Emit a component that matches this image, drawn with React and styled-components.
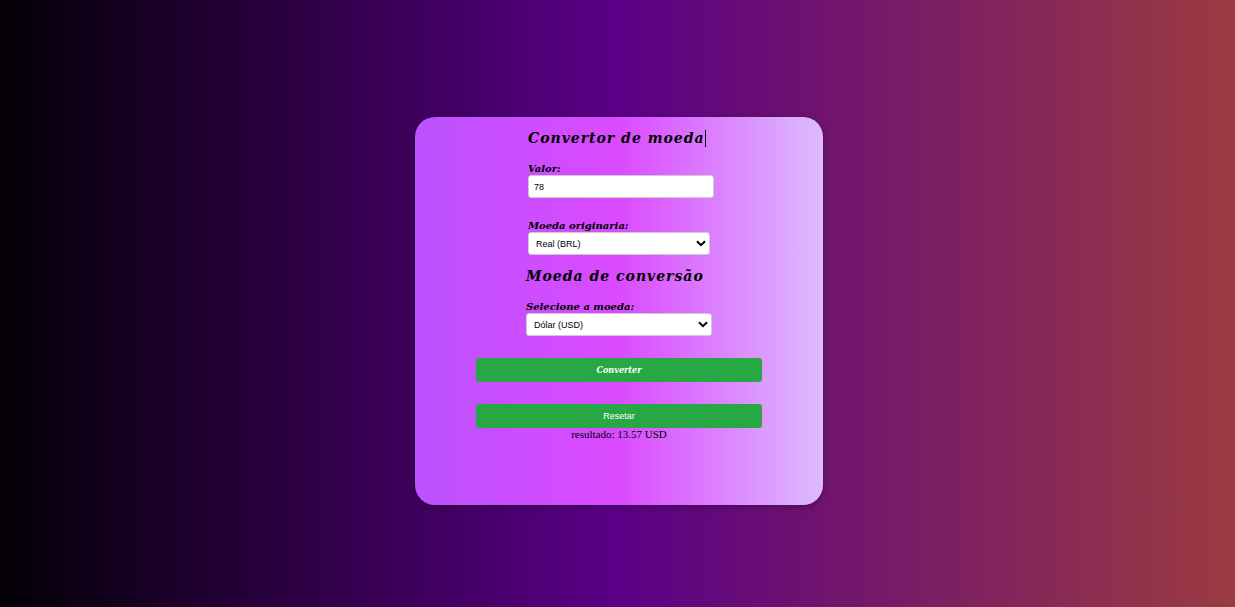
import React, { useState } from "react";
import styled, { createGlobalStyle } from "styled-components";

const GlobalStyle = createGlobalStyle`
  * { box-sizing: border-box; }
  body {
    margin: 0;
    font-family: "Liberation Serif", "Times New Roman", serif;
    color: #000;
  }
`;

const slab = `"DejaVu Serif", serif`;
const slabNarrow = `"DejaVu Serif Condensed", "DejaVu Serif", serif`;

const Page = styled.main`
  min-height: 100vh;
  display: flex;
  flex-direction: column;
  align-items: center;
  padding: 117px 0 102px 3px;
  background: linear-gradient(to right, #030006, #5a0086 50%, #9b3b41);
`;

const Card = styled.form`
  width: 33vw;
  min-width: 300px;
  flex: 1;
  display: flex;
  flex-direction: column;
  align-items: center;
  padding: 13px 0 60px;
  border-radius: 20px;
  background: linear-gradient(to right, #bb52ff, #db4aff 50%, #dcbcff);
  box-shadow: 0 2px 6px rgba(0, 0, 0, 0.3);
`;

const Group = styled.section`
  display: flex;
  flex-direction: column;
  align-items: flex-start;
  width: ${(p) => p.$width}px;
  margin-bottom: ${(p) => p.$gap}px;
`;

const Title = styled.h1`
  margin: 0 0 16px;
  font: italic bold 14px/17px ${slab};
  letter-spacing: 1px;
  white-space: nowrap;
  border-right: 1px solid ${(p) => (p.$caret ? "#000" : "transparent")};
`;

const Label = styled.label`
  font: italic bold 10px/12px ${slab};
  white-space: nowrap;
`;

const Input = styled.input`
  width: 186px;
  height: 23px;
  padding: 0 5px;
  border: 1px solid #ccc;
  border-radius: 3px;
  background: #fff;
  font: 9px "Liberation Sans", Arial, sans-serif;
  color: #000;
  margin-bottom: 22px;
`;

const SelectBox = styled.div`
  position: relative;
  width: 100%;
  height: 23px;
`;

const Select = styled.select`
  appearance: none;
  width: 100%;
  height: 100%;
  padding: 0 20px 0 7px;
  border: 1px solid #ccc;
  border-radius: 3px;
  background: #fff;
  font: 9px "Liberation Sans", Arial, sans-serif;
  color: #000;
`;

const Chevron = styled.svg`
  position: absolute;
  right: 4px;
  top: 8px;
  pointer-events: none;
`;

const Button = styled.button`
  width: 70%;
  height: 24px;
  margin: 0 0 ${(p) => (p.$slab ? 22 : 0)}px;
  padding: 0;
  border: 0;
  border-radius: 3px;
  background: #28a745;
  color: #fff;
  font: ${(p) => (p.$slab ? `italic bold 9px ${slabNarrow}` : `9px "Liberation Sans", Arial, sans-serif`)};
  cursor: pointer;
`;

const Result = styled.output`
  font-size: 11px;
  line-height: 12px;
`;

const currencies = [
  ["BRL", "Real (BRL)"],
  ["USD", "Dólar (USD)"],
];

function CurrencySelect({ id, value, onChange }) {
  return (
    <SelectBox>
      <Select id={id} value={value} onChange={(e) => onChange(e.target.value)}>
        {currencies.map(([code, name]) => (
          <option key={code} value={code}>{name}</option>
        ))}
      </Select>
      <Chevron width="10" height="7" viewBox="0 0 10 7" fill="none" stroke="#000" strokeWidth="2" aria-hidden="true">
        <path d="M1 1.2 5 5.2 9 1.2" />
      </Chevron>
    </SelectBox>
  );
}

export default function App() {
  const [amount, setAmount] = useState("78");
  const [from, setFrom] = useState("BRL");
  const [to, setTo] = useState("USD");
  const [result, setResult] = useState("13.57 USD");

  const convert = (e) => {
    e.preventDefault();
    const perReal = { BRL: 1, USD: 0.174 };
    setResult(`${((Number(amount) / perReal[from]) * perReal[to]).toFixed(2)} ${to}`);
  };

  const reset = () => {
    setAmount("");
    setResult("");
  };

  return (
    <>
      <GlobalStyle />
      <Page>
        <Card onSubmit={convert}>
          <Group $width={182} $gap={13}>
            <Title $caret>Convertor de moeda</Title>
            <Label htmlFor="amount">Valor:</Label>
            <Input id="amount" value={amount} onChange={(e) => setAmount(e.target.value)} />
            <Label htmlFor="from">Moeda originaria:</Label>
            <CurrencySelect id="from" value={from} onChange={setFrom} />
          </Group>
          <Group $width={186} $gap={22}>
            <Title as="h2">Moeda de conversão</Title>
            <Label htmlFor="to">Selecione a moeda:</Label>
            <CurrencySelect id="to" value={to} onChange={setTo} />
          </Group>
          <Button type="submit" $slab>Converter</Button>
          <Button type="button" onClick={reset}>Resetar</Button>
          <Result>resultado: {result}</Result>
        </Card>
      </Page>
    </>
  );
}
